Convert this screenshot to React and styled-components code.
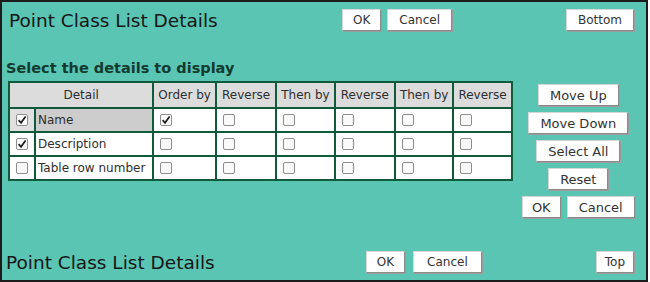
import React from "react";
import styled, { createGlobalStyle } from "styled-components";

const GlobalStyle = createGlobalStyle`
  html, body {
    margin: 0;
    padding: 0;
    background: #ffffff;
  }
  body {
    font-family: "DejaVu Sans", "Liberation Sans", sans-serif;
  }
`;

const Frame = styled.div`
  width: 648px;
  height: 282px;
  box-sizing: border-box;
  border: 2px solid #1c1c1c;
  background: #5bc5b4;
  display: flex;
  flex-direction: column;
`;

const Bar = styled.div`
  display: flex;
  align-items: center;
  padding: ${(p) => (p.$bottom ? "0 12px 7px 4px" : "7px 12px 0 7px")};
  margin-top: ${(p) => (p.$bottom ? "auto" : "0")};
`;

const Title = styled.div`
  flex: 1;
  font-size: 18.5px;
  color: #161616;
  white-space: nowrap;
`;

const ButtonGroup = styled.div`
  display: flex;
  gap: ${(p) => p.$gap || 6}px;
`;

const Spacer = styled.div`
  width: 114px;
`;

const Button = styled.button`
  height: 22px;
  padding: 0 ${(p) => p.$pad || 10}px;
  font-family: "DejaVu Sans", "Liberation Sans", sans-serif;
  font-size: ${(p) => p.$size || 12}px;
  color: #333;
  background: #ffffff;
  border: 1px solid #d6d6d6;
  border-right-color: #8a8a8a;
  border-bottom-color: #8a8a8a;
  box-shadow: 1px 1px 0 #9c9c9c;
  cursor: pointer;
`;

const SubTitle = styled.div`
  margin: 28px 0 4px 4px;
  font-size: 14.5px;
  font-weight: bold;
  color: #123a2e;
  line-height: 18px;
`;

const Middle = styled.div`
  display: flex;
  align-items: flex-start;
`;

const Table = styled.table`
  margin-left: 6px;
  border-collapse: collapse;
  border: 2px solid #0e5a3a;
  font-size: 12px;
  color: #2e2e2e;
`;

const Th = styled.th`
  height: 24px;
  padding: 0 ${(p) => p.$pad || 4}px;
  font-weight: normal;
  background: #dcdcdc;
  border: 2px solid #0e5a3a;
  white-space: nowrap;
`;

const Td = styled.td`
  height: 22px;
  padding: ${(p) => (p.$name ? "0 7px 0 2px" : p.$center ? "0 6px" : "0 4px")};
  background: ${(p) => p.$bg || "#ffffff"};
  border: 2px solid #0e5a3a;
  white-space: nowrap;
  text-align: ${(p) => (p.$center ? "center" : "left")};
`;

const Box = styled.span`
  display: inline-block;
  width: 12px;
  height: 12px;
  box-sizing: border-box;
  border: 1px solid #8e8e8e;
  border-radius: 2px;
  background: #fafafa;
  vertical-align: middle;
  margin-left: ${(p) => (p.$center ? 0 : 2)}px;
  position: relative;
  top: -1px;
`;

const Mark = styled.svg`
  display: block;
  width: 10px;
  height: 10px;
`;

const Side = styled.div`
  flex: 1;
  display: flex;
  flex-direction: column;
  align-items: center;
  gap: 6px;
  padding: 3px 2px 0 0;
`;

function Check({ on, center }) {
  return (
    <Box $center={center}>
      {on && (
        <Mark viewBox="0 0 10 10">
          <path
            d="M1.6 5.2 L4 7.8 L8.6 1.4"
            fill="none"
            stroke="#1e1e1e"
            strokeWidth="1.7"
          />
        </Mark>
      )}
    </Box>
  );
}

const rows = [
  { label: "Name", show: true, selected: true, order: true },
  { label: "Description", show: true, selected: false, order: false },
  { label: "Table row number", show: false, selected: false, order: false },
];

const headers = ["Order by", "Reverse", "Then by", "Reverse", "Then by", "Reverse"];
const headerPads = [4, 5, 4, 5, 4, 4];

function TopBar({ bottom }) {
  return (
    <Bar $bottom={bottom}>
      <Title>Point Class List Details</Title>
      <ButtonGroup $gap={bottom ? 8 : 6}>
        <Button $pad={10}>OK</Button>
        <Button $pad={bottom ? 13 : 11}>Cancel</Button>
      </ButtonGroup>
      <Spacer />
      <Button $pad={bottom ? 8 : 11}>{bottom ? "Top" : "Bottom"}</Button>
    </Bar>
  );
}

export default function App() {
  return (
    <>
      <GlobalStyle />
      <Frame>
        <TopBar />
        <SubTitle>Select the details to display</SubTitle>
        <Middle>
          <Table>
            <thead>
              <tr>
                <Th colSpan={2}>Detail</Th>
                {headers.map((h, i) => (
                  <Th key={i} $pad={headerPads[i]}>
                    {h}
                  </Th>
                ))}
              </tr>
            </thead>
            <tbody>
              {rows.map((r) => (
                <tr key={r.label}>
                  <Td $center $bg={r.selected ? "#e0e0e0" : "#ffffff"}>
                    <Check on={r.show} center />
                  </Td>
                  <Td $name $bg={r.selected ? "#cdcdcd" : "#ffffff"}>
                    {r.label}
                  </Td>
                  {headers.map((h, i) => (
                    <Td key={i}>
                      <Check on={i === 0 && r.order} />
                    </Td>
                  ))}
                </tr>
              ))}
            </tbody>
          </Table>
          <Side>
            <Button $size={13} $pad={11}>Move Up</Button>
            <Button $size={13} $pad={11}>Move Down</Button>
            <Button $size={13} $pad={11}>Select All</Button>
            <Button $size={13} $pad={11}>Reset</Button>
            <ButtonGroup>
              <Button $size={13} $pad={9}>OK</Button>
              <Button $size={13} $pad={11}>Cancel</Button>
            </ButtonGroup>
          </Side>
        </Middle>
        <TopBar bottom />
      </Frame>
    </>
  );
}
